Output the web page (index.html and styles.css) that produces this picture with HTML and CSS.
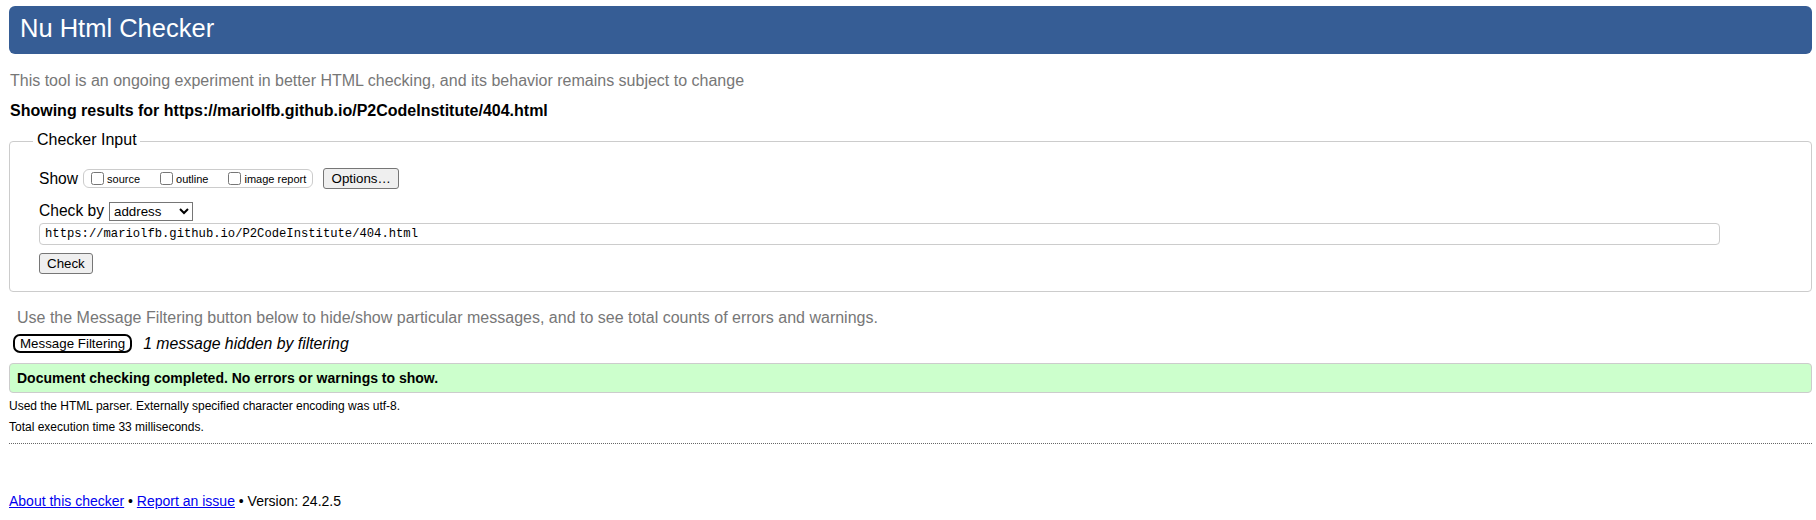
FILE: index.html
```html
<!DOCTYPE html>
<html lang="en">
<head>
<meta charset="utf-8">
<title>Showing results for https://mariolfb.github.io/P2CodeInstitute/404.html - Nu Html Checker</title>
<link rel="stylesheet" href="styles.css">
</head>
<body>
<h1 class="masthead">Nu Html Checker</h1>
<p class="lead">This tool is an ongoing experiment in better HTML checking, and its behavior remains subject to change</p>
<p class="showing">Showing results for https://mariolfb.github.io/P2CodeInstitute/404.html</p>
<form class="checker-form">
  <fieldset class="checker-input">
    <legend>Checker Input</legend>
    <div class="show-row">
      <span class="show-label">Show</span>
      <div class="show-opts" role="group">
        <label class="opt"><input type="checkbox">source</label>
        <label class="opt"><input type="checkbox">outline</label>
        <label class="opt"><input type="checkbox">image report</label>
      </div>
      <button type="button" class="btn options-btn">Options…</button>
    </div>
    <div class="checkby-row">
      <span class="checkby-label">Check by</span>
      <select class="checkby-select">
        <option>address</option>
        <option>file upload</option>
        <option>text input</option>
      </select>
    </div>
    <input class="url-input" type="url" value="https://mariolfb.github.io/P2CodeInstitute/404.html">
    <button type="button" class="btn check-btn">Check</button>
  </fieldset>
</form>
<p class="filter-hint">Use the Message Filtering button below to hide/show particular messages, and to see total counts of errors and warnings.</p>
<div class="filter-row">
  <button type="button" class="filter-btn">Message Filtering</button>
  <span class="hidden-note">1 message hidden by filtering</span>
</div>
<div class="success">Document checking completed. No errors or warnings to show.</div>
<div class="meta-block">
  <p class="meta">Used the HTML parser. Externally specified character encoding was utf-8.</p>
  <p class="meta">Total execution time 33 milliseconds.</p>
</div>
<hr class="dots">
<p class="footer"><a href="#">About this checker</a> • <a href="#">Report an issue</a> • Version: 24.2.5</p>
</body>
</html>
```

FILE: styles.css
```css
* {
  box-sizing: border-box;
}

body {
  margin: 0;
  font-family: "Liberation Sans", Arial, sans-serif;
  color: #000;
  background: #fff;
}

.masthead {
  margin: 6px 4px 0 9px;
  height: 48px;
  padding: 0 0 3px 11px;
  background: #365d95;
  color: #fff;
  border-radius: 6px;
  font-size: 25.5px;
  line-height: 45px;
  font-weight: normal;
}

.lead {
  margin: 18px 0 0 10px;
  font-size: 16px;
  line-height: 18px;
  color: #777;
}

.showing {
  margin: 12px 0 0 10px;
  font-size: 16px;
  line-height: 18px;
  font-weight: bold;
}

.checker-form {
  margin: 10px 4px 0 9px;
}

.checker-input {
  margin: 0;
  min-width: 0;
  padding: 15px 23px 17px 23px;
  border: 1px solid #ccc;
  border-radius: 4px;
}

.checker-input legend {
  padding: 0 3px 3px 4px;
  font-size: 16px;
  line-height: 20px;
}

.show-row {
  display: flex;
  align-items: center;
  height: 21px;
  margin-left: 6px;
}

.show-label {
  font-size: 15.6px;
  margin-right: 5px;
}

.show-opts {
  display: flex;
  align-items: center;
  gap: 20px;
  height: 19px;
  padding: 0 6px 0 7px;
  border: 1px solid #ccc;
  border-radius: 6px;
}

.opt {
  display: flex;
  align-items: center;
  font-size: 11px;
}

.opt input {
  margin: 0 3px 0 0;
  width: 13px;
  height: 13px;
}

.btn {
  font-family: "Liberation Sans", Arial, sans-serif;
  font-size: 13.33px;
  color: #000;
  background: #efefef;
  border: 1px solid #767676;
  border-radius: 3px;
  padding: 0 7px;
}

.options-btn {
  margin-left: 10px;
  width: 76px;
  height: 21px;
}

.checkby-row {
  display: flex;
  align-items: center;
  height: 22px;
  margin: 11px 0 0 6px;
}

.checkby-label {
  font-size: 15.6px;
}

.checkby-select {
  margin-left: 5px;
  width: 84px;
  height: 19px;
  font-family: "Liberation Sans", Arial, sans-serif;
  font-size: 13.33px;
  border: 1px solid #767676;
  border-radius: 0;
  background: #fff;
  color: #000;
}

.url-input {
  display: block;
  margin: 1px 0 0 6px;
  width: 1681px;
  height: 22px;
  padding: 0 5px;
  border: 1px solid #ccc;
  border-radius: 4px;
  font-family: "Liberation Mono", "DejaVu Sans Mono", monospace;
  font-size: 12.2px;
  color: #000;
}

.check-btn {
  display: block;
  margin: 8px 0 0 6px;
  height: 21px;
}

.filter-hint {
  margin: 17px 0 0 17px;
  font-size: 16px;
  line-height: 18px;
  color: #777;
}

.filter-row {
  display: flex;
  align-items: center;
  height: 19px;
  margin: 7px 0 0 13px;
}

.filter-btn {
  height: 19px;
  padding: 0 5px;
  border: 2px solid #000;
  border-radius: 7px;
  background: #fff;
  color: #000;
  font-family: "Liberation Sans", Arial, sans-serif;
  font-size: 13.33px;
}

.hidden-note {
  margin-left: 11px;
  font-size: 15.8px;
  line-height: 19px;
  font-style: italic;
}

.success {
  margin: 10px 4px 0 9px;
  height: 30px;
  padding: 0 7px;
  border: 1px solid #ccc;
  border-radius: 4px;
  background: #ccffcc;
  font-size: 14px;
  line-height: 28px;
  font-weight: bold;
}

.meta-block {
  margin: 3px 0 0 9px;
}

.meta {
  margin: 0;
  font-size: 12px;
  line-height: 21px;
}

.dots {
  margin: 5px 4px 0 9px;
  height: 0;
  border: 0;
  border-top: 1px dotted #666;
}

.footer {
  margin: 48px 0 0 9px;
  font-size: 14px;
  line-height: 18px;
}

.footer a {
  color: #0000ee;
}
```
